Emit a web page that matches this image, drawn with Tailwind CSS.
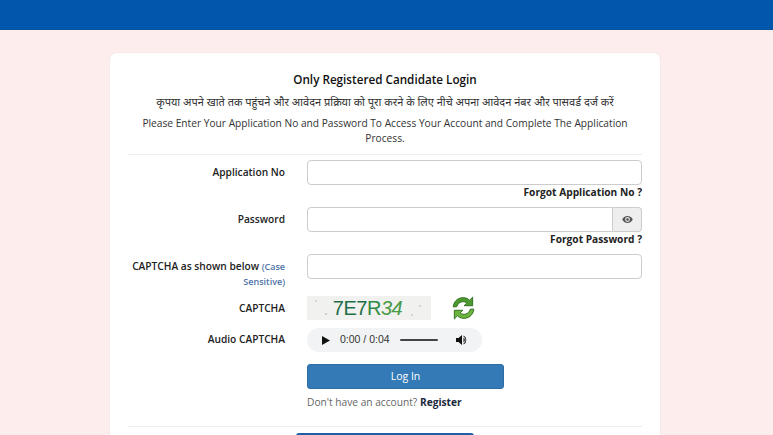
<!DOCTYPE html>
<html lang="en">
<head>
    <meta charset="UTF-8">
    <meta name="viewport" content="width=device-width, initial-scale=1.0">
    <title>Candidate Login</title>
    <script src="https://cdn.jsdelivr.net/npm/@tailwindcss/browser@4"></script>
</head>
<body class="h-[435px] overflow-hidden bg-[#feeded] font-['Open_Sans','Noto_Sans',sans-serif] text-[10.2px] text-[#212529]">
    <div class="h-[30px] bg-[#0057ab] border-b border-[#0a4f9c]"></div>

    <div class="ml-[109px] mt-[22px] w-[552px] rounded-lg border border-[#f6e9e9] bg-white px-[18px] pt-[17px]">
        <!-- Heading -->
        <div class="border-b border-[#eeeeee] pb-[8px] text-center">
            <h1 class="text-[11.7px] leading-[18px] font-semibold text-[#111]">Only Registered Candidate Login</h1>
            <p class="mt-[5px] text-[11px] leading-[17px] text-[#333]">कृपया अपने खाते तक पहुंचने और आवेदन प्रक्रिया को पूरा करने के लिए नीचे अपना आवेदन नंबर और पासवर्ड दर्ज करें</p>
            <p class="mt-[6px] text-[10.2px] leading-[15px] text-[#333]">Please Enter Your Application No and Password To Access Your Account and Complete The Application Process.</p>
        </div>

        <!-- Form -->
        <div class="mt-[5px] grid grid-cols-[157px_335px] gap-x-[22px]">
            <label class="pt-[5px] text-right font-semibold leading-[15px] text-[#222]">Application No</label>
            <div>
                <input class="block h-[25px] w-full rounded border border-[#cccccc] bg-white" type="text">
                <div class="text-right font-bold leading-[15px] text-[#222]">Forgot Application No ?</div>
            </div>

            <label class="mt-[7px] pt-[5px] text-right font-semibold leading-[15px] text-[#222]">Password</label>
            <div class="mt-[7px]">
                <div class="flex h-[25px]">
                    <input class="h-full min-w-0 flex-1 rounded-l border border-[#cccccc] bg-white" type="password">
                    <span class="flex w-[29px] items-center justify-center rounded-r border border-l-0 border-[#cccccc] bg-[#eeeeee]">
                        <svg class="h-[11px] w-[11px]" viewBox="0 0 16 16" fill="#555"><path d="M8 3C4.500 3 1.600 5.200 0.300 8c1.300 2.800 4.200 5 7.700 5s6.400-2.200 7.700-5C14.400 5.200 11.500 3 8 3zm0 8.500a3.500 3.500 0 1 1 0-7 3.500 3.500 0 0 1 0 7zM8 6a2 2 0 1 0 0 4 2 2 0 0 0 0-4z"/></svg>
                    </span>
                </div>
                <div class="text-right font-bold leading-[15px] text-[#222]">Forgot Password ?</div>
            </div>

            <label class="mt-[12px] text-right font-semibold leading-[15px] text-[#222]">CAPTCHA as shown below <span class="text-[9px] font-semibold text-[#4f74a8]">(Case Sensitive)</span></label>
            <input class="mt-[7px] block h-[25px] w-full rounded border border-[#cccccc] bg-white" type="text">

            <label class="mt-[7px] pt-[5px] text-right font-semibold leading-[15px] text-[#222]">CAPTCHA</label>
            <div class="mt-[7px] flex items-center">
                <div class="relative flex h-[24px] w-[124px] items-center justify-center bg-[#f1f1ef] pr-[3px] font-['Liberation_Sans',sans-serif] text-[20px] tracking-[-0.5px] text-[#1f6f4a]">
                    7E7<span class="text-[#2f8a46]">R</span><span class="italic text-[#4a9a48]">34</span>
                    <span class="absolute left-[18px] top-[17px] h-[2px] w-[2px] bg-[#cfcfcb]"></span>
                    <span class="absolute left-[8px] top-[4px] h-[2px] w-[2px] bg-[#d8d8d4]"></span>
                    <span class="absolute right-[10px] top-[9px] h-[2px] w-[2px] bg-[#d4d4d0]"></span>
                    <span class="absolute right-[18px] top-[18px] h-[2px] w-[2px] bg-[#d4d4d0]"></span>
                </div>
                <svg class="ml-[20px] h-[24px] w-[25px]" viewBox="2 1.500 20 21">
                    <path d="M3 11C3.500 5.500 8 2.500 12.500 3c2 .2 3.600 1 4.800 2.200L20 2.500V10h-7.500l2.400-2.400c-2.600-2-7.400-1.500-8.900 3.400z" fill="#4c9a2f" stroke="#2a6a1a" stroke-width=".8"/>
                    <path d="M21 13c-.5 5.500-5 8.500-9.500 8-2-.2-3.600-1-4.800-2.200L4 21.500V14h7.500l-2.400 2.400c2.600 2 7.400 1.500 8.900-3.400z" fill="#6db33f" stroke="#2a6a1a" stroke-width=".8"/>
                </svg>
            </div>

            <label class="mt-[8px] pt-[4px] text-right font-semibold leading-[15px] text-[#222]">Audio CAPTCHA</label>
            <div class="mt-[8px] flex h-[24px] w-[175px] items-center rounded-full bg-[#f1f3f4] pl-[15px] font-['Liberation_Sans',sans-serif] text-[#222]">
                <svg class="h-[9px] w-[8px]" viewBox="0 0 8 9" fill="#111"><path d="M0 0l8 4.500L0 9z"/></svg>
                <span class="ml-[10px] text-[10.5px] text-[#333]">0:00 / 0:04</span>
                <span class="ml-[10px] h-[2px] w-[38px] rounded bg-[#444]"></span>
                <svg class="ml-[18px] h-[12px] w-[12px]" viewBox="0 0 12 12" fill="#111"><path d="M0 4h2.500L6 1v10L2.500 8H0z"/><path d="M7.500 3.500a3 3 0 0 1 0 5z"/><path d="M7.500 1.500a5 5 0 0 1 0 9v-1a4 4 0 0 0 0-7z"/></svg>
            </div>

            <div class="col-start-2 mt-[12px]">
                <button class="block h-[25px] w-[197px] rounded-[3px] border border-[#2e6da4] bg-[#337ab7] text-[10.5px] text-white" type="button">Log In</button>
                <p class="mt-[6px] leading-[15px] text-[#666]">Don't have an account? <a class="font-bold text-[#1b2a3d]" href="#">Register</a></p>
            </div>
        </div>

        <div class="mt-[16px] border-t border-[#eeeeee] pt-[6px]">
            <button class="ml-[168px] block h-[20px] w-[178px] rounded-[3px] bg-[#1f5fa8]" type="button"></button>
        </div>
    </div>
</body>
</html>
